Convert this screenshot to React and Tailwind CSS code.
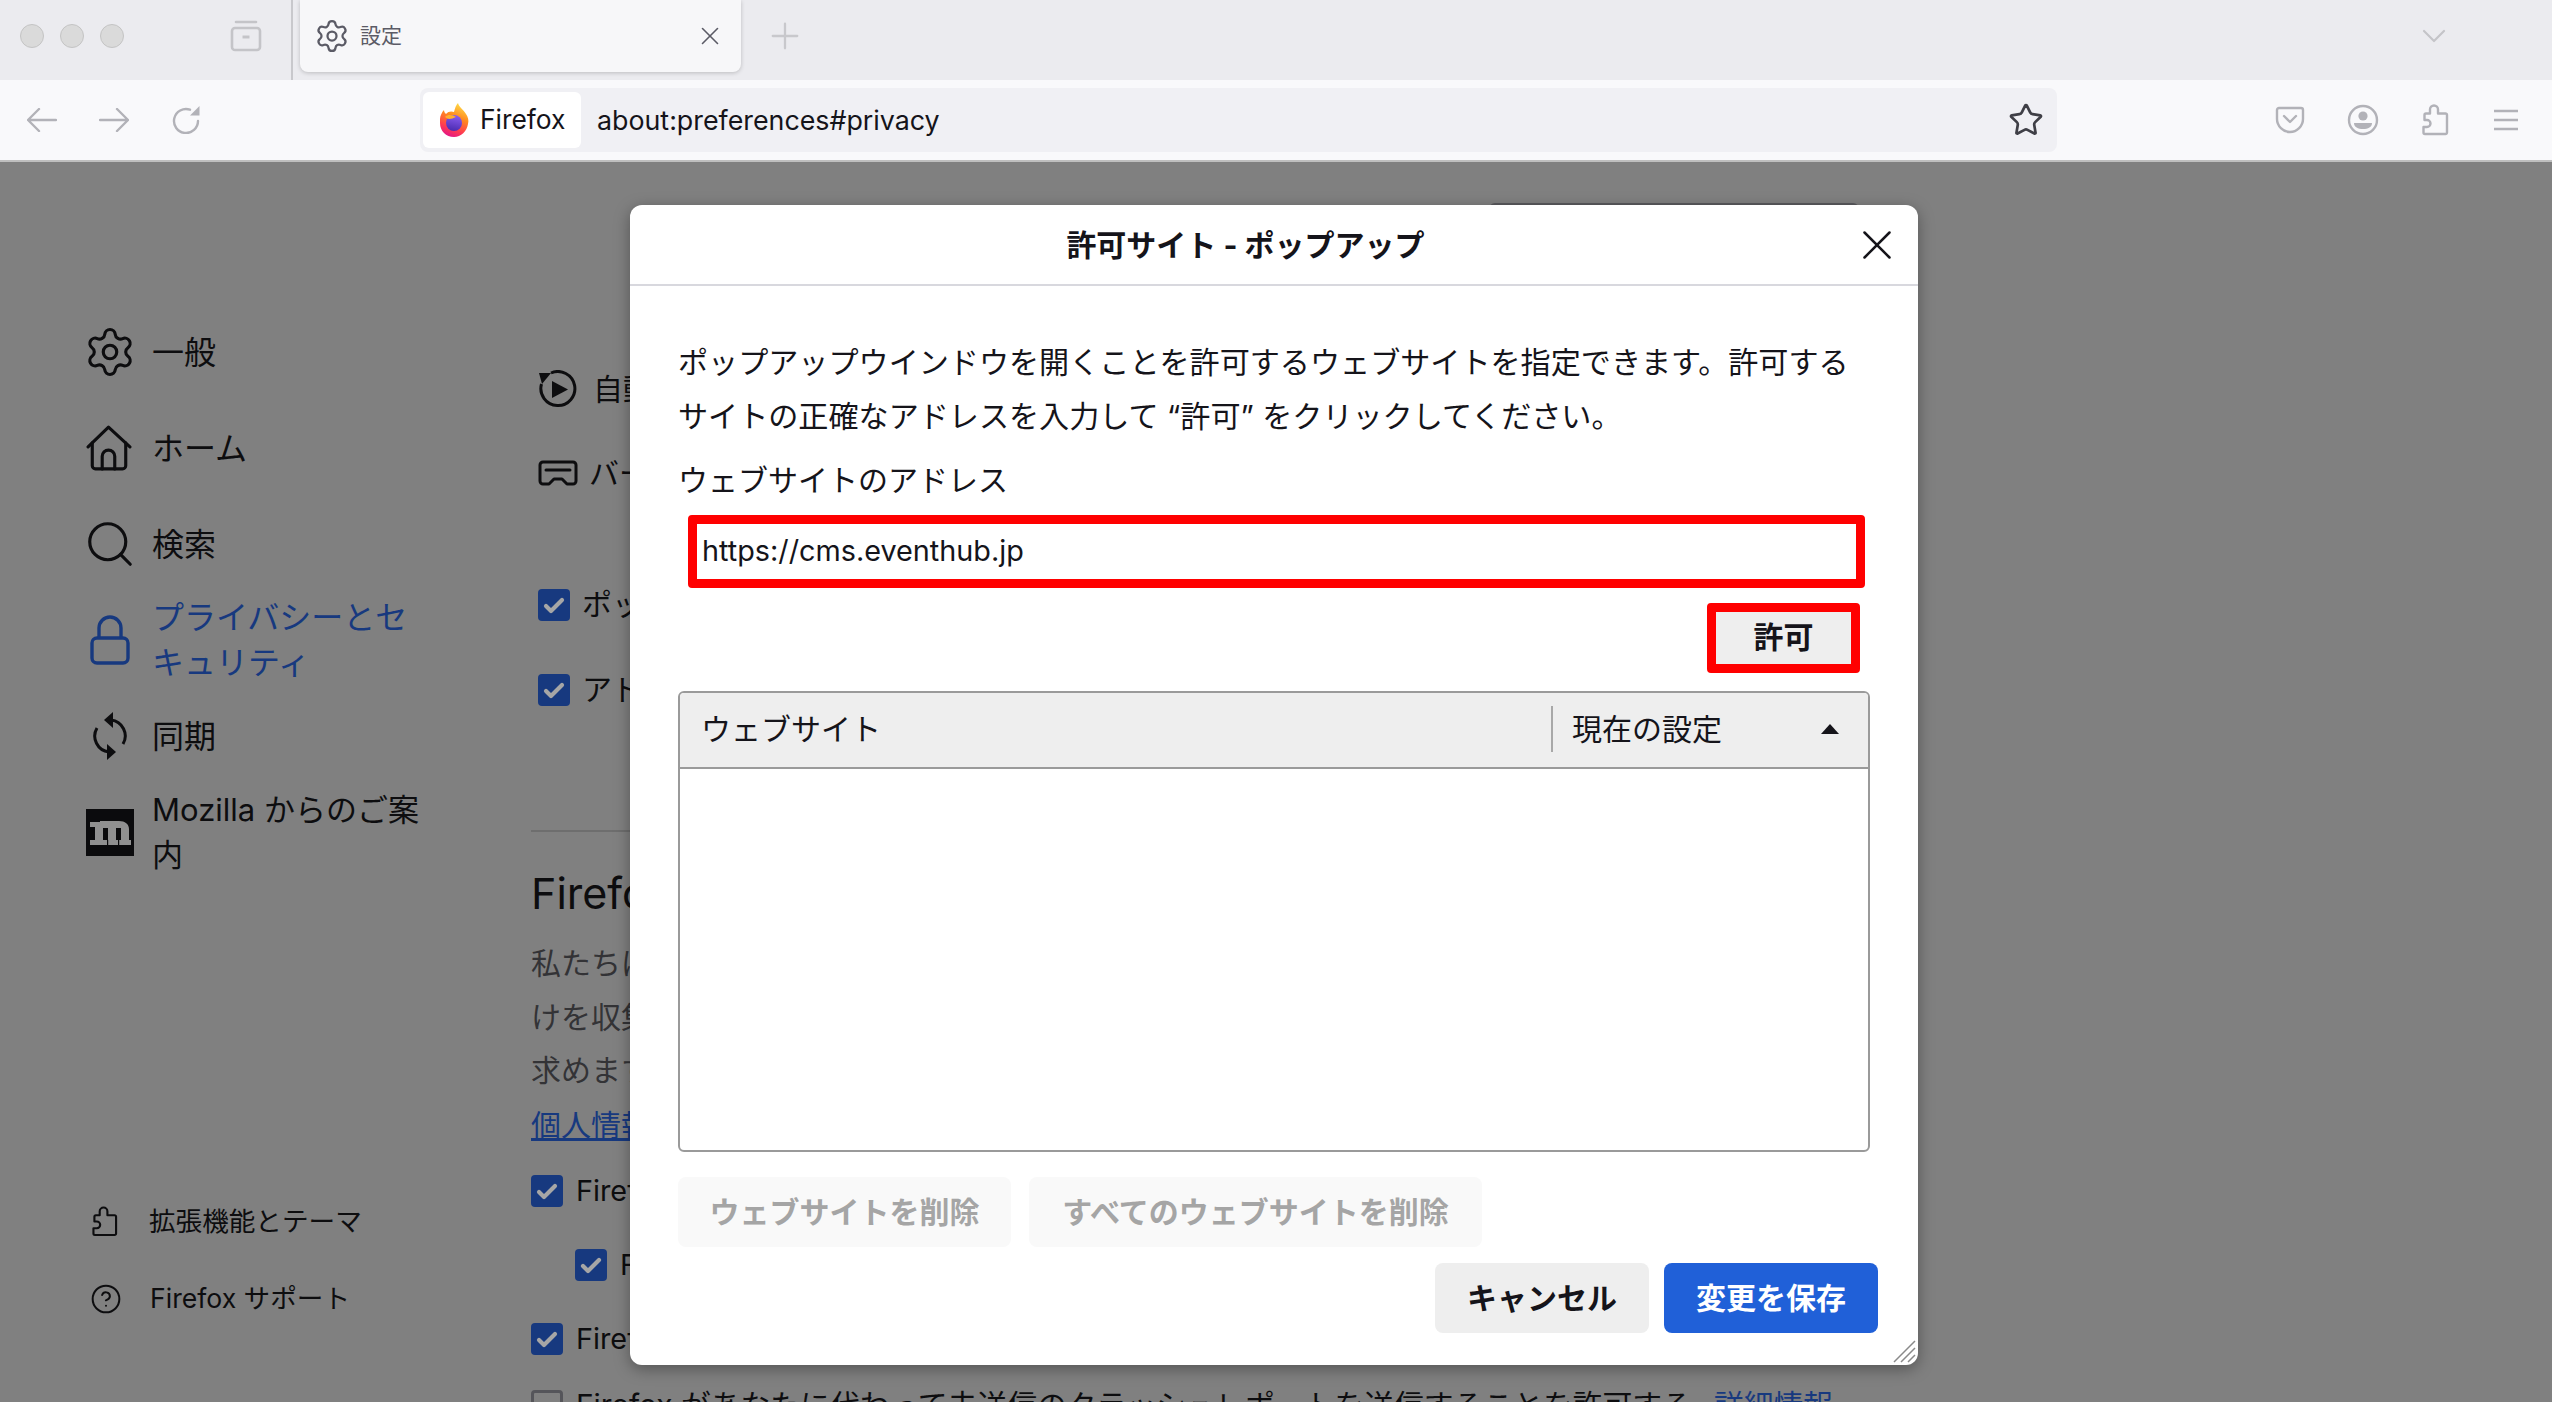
import { Settings, Search, CircleHelp, X, Plus, ChevronDown, Star } from 'lucide-react';

function FirefoxLogo() {
  return (
    <svg viewBox="0 0 30 34" className="w-[30px] h-[34px] shrink-0">
      <defs>
        <linearGradient id="ffBody" x1="0.7" y1="0" x2="0.35" y2="1">
          <stop offset="0" stopColor="#ffe04a" />
          <stop offset="0.4" stopColor="#ff8a1f" />
          <stop offset="0.75" stopColor="#ff3d4f" />
          <stop offset="1" stopColor="#e31587" />
        </linearGradient>
        <linearGradient id="ffCore" x1="0.6" y1="0" x2="0.4" y2="1">
          <stop offset="0" stopColor="#8a5cf0" />
          <stop offset="1" stopColor="#4a2bb0" />
        </linearGradient>
      </defs>
      <path d="M1 16C1 13 3 9 5 7c0 2 1 3 2 4 2-3 6-3 8-2 1-4 2-7 4-9 1 4 5 6 8 11 2 3 3 6 2 10-1 7-7 13-14 13C7 34 1 28 1 20z" fill="url(#ffBody)" />
      <circle cx="15" cy="20" r="8" fill="url(#ffCore)" />
      <path d="M6 14c3-3 8-2 11 0-3 1-4 2-7 2 0 0-3-1-4-2z" fill="#ffb02e" />
    </svg>
  );
}

function ViewIcon() {
  return (
    <svg viewBox="0 0 32 32" fill="none" stroke="#c4c4c8" strokeWidth="2.6" className="w-[32px] h-[32px]">
      <path d="M6 2h20" strokeLinecap="round" />
      <rect x="2" y="8" width="28" height="22" rx="3" />
      <path d="M12.5 17h7" strokeWidth="3" />
    </svg>
  );
}

function BackIcon({ flip }) {
  return (
    <svg viewBox="0 0 30 24" fill="none" stroke="#b2b2b8" strokeWidth="2.4" strokeLinecap="round" strokeLinejoin="round" className="w-[30px] h-[24px]">
      <path d={flip ? 'M1 12h28M18 1l11 11-11 11' : 'M1 12h28M12 1 1 12l11 11'} />
    </svg>
  );
}

function ReloadIcon() {
  return (
    <svg viewBox="0 0 28 28" fill="none" stroke="#b2b2b8" strokeWidth="2.4" className="w-[28px] h-[28px]">
      <path d="M18 3.7A12 12 0 1 0 26 15" strokeLinecap="round" />
      <path d="M18 9.5h9.5V0z" fill="#b2b2b8" stroke="none" />
    </svg>
  );
}

function PocketIcon() {
  return (
    <svg viewBox="0 0 30 30" fill="none" stroke="#b2b2b8" strokeWidth="2.4" className="w-[30px] h-[30px]" strokeLinecap="round" strokeLinejoin="round">
      <path d="M4 3h22a2 2 0 0 1 2 2v9c0 7-6 13-13 13S2 21 2 14V5a2 2 0 0 1 2-2z" />
      <path d="M9 11l6 6 6-6" />
    </svg>
  );
}

function AccountIcon() {
  return (
    <svg viewBox="0 0 32 32" className="w-[32px] h-[32px]">
      <circle cx="16" cy="16" r="14" fill="none" stroke="#b2b2b8" strokeWidth="2.4" />
      <circle cx="16" cy="12" r="4.6" fill="#b2b2b8" />
      <path d="M7 19h18c0 4-4 6-9 6s-9-2-9-6z" fill="#b2b2b8" />
    </svg>
  );
}

function PuzzleIcon({ color = '#b2b2b8', size = 'w-[27px] h-[32px]', width = 2.4 }) {
  return (
    <svg viewBox="0 0 27 32" fill="none" stroke={color} strokeWidth={width} strokeLinejoin="round" className={`${size} shrink-0`}>
      <path d="M3 30a1.5 1.5 0 0 1-1.5-1.5V23H5a3.5 3.5 0 0 0 0-7H2.5v-5A1.5 1.5 0 0 1 4 9.500h4V5.500a4 4 0 0 1 8 0v4h7.500A1.500 1.500 0 0 1 25 11v17.500a1.500 1.500 0 0 1-1.500 1.500z" />
    </svg>
  );
}

function HomeIcon() {
  return (
    <svg viewBox="0 0 44 44" fill="none" stroke="#0d0d0f" strokeWidth="3" strokeLinejoin="round" strokeLinecap="round" className="w-[46px] h-[46px] mr-[2px] shrink-0">
      <path d="M2 21 21.5 2 42 21" />
      <path d="M6 17v22a3 3 0 0 0 3 3h26a3 3 0 0 0 3-3V17" />
      <path d="M15.500 42V30a6 6 0 0 1 12 0v12" />
    </svg>
  );
}

function LockIcon() {
  return (
    <svg viewBox="0 0 40 50" fill="none" stroke="#17397f" strokeWidth="3.4" className="w-[40px] h-[50px]">
      <rect x="2" y="23" width="36" height="25" rx="5" />
      <path d="M9 23V13a11 11 0 0 1 22 0v10" />
    </svg>
  );
}

function SyncIcon() {
  return (
    <svg viewBox="0 0 36 48" fill="none" stroke="#0d0d0f" strokeWidth="3" className="w-[36px] h-[48px]">
      <path d="M19 8A16 16 0 0 1 31 32" />
      <path d="M17 40A16 16 0 0 1 5 16" />
      <path d="M21 0 12 8l9 8z" fill="#0d0d0f" stroke="none" />
      <path d="M15 32l9 8-9 8z" fill="#0d0d0f" stroke="none" />
    </svg>
  );
}

function MozillaLogo() {
  return (
    <svg viewBox="0 0 48 47" className="w-[48px] h-[47px]">
      <rect width="48" height="47" fill="#0b0b0d" />
      <path d="M4 13h10v-1h19c6 0 10 3 10 8v11h2v5H4v-5h5V18H4z" fill="#909090" />
      <rect x="17" y="19" width="5" height="12" fill="#0b0b0d" />
      <rect x="30" y="19" width="5" height="12" fill="#0b0b0d" />
      <rect x="21" y="31" width="1.200" height="5" fill="#0b0b0d" />
      <rect x="32" y="31" width="1.200" height="5" fill="#0b0b0d" />
    </svg>
  );
}

function AutoplayIcon() {
  return (
    <svg viewBox="0 0 38 38" fill="none" stroke="#0d0d0f" strokeWidth="3" className="w-[38px] h-[38px] shrink-0">
      <path d="M12 3A17 17 0 1 1 2.500 14" />
      <path d="M13 11l16 8.500L13 28z" fill="#0d0d0f" stroke="none" />
      <path d="M0 3h12L3 14z" fill="#0d0d0f" stroke="none" />
    </svg>
  );
}

function VrIcon() {
  return (
    <svg viewBox="0 0 40 26" fill="none" stroke="#0d0d0f" strokeWidth="3" strokeLinejoin="round" strokeLinecap="round" className="w-[40px] h-[26px] shrink-0">
      <path d="M5 2h30a3 3 0 0 1 3 3v16a3 3 0 0 1-3 3h-6l-5-5h-8l-5 5H5a3 3 0 0 1-3-3V5a3 3 0 0 1 3-3z" />
      <path d="M8 10h24" />
    </svg>
  );
}

function Checkbox({ checked = true }) {
  if (!checked) {
    return <div className="w-[32px] h-[32px] shrink-0 rounded-[4px] border-[3px] border-[#55555a]" />;
  }
  return (
    <div className="w-[32px] h-[32px] shrink-0 rounded-[4px] bg-[#17397f] flex items-center justify-center">
      <svg viewBox="0 0 24 24" fill="none" stroke="#a6a6a6" strokeWidth="4.200" strokeLinecap="round" strokeLinejoin="round" className="w-[24px] h-[24px]">
        <path d="M4 13l5 5L20 7" />
      </svg>
    </div>
  );
}

const NAV = [
  { icon: <Settings className="w-[54px] h-[54px] shrink-0" strokeWidth={1.4} />, label: '一般' },
  { icon: <HomeIcon />, label: 'ホーム' },
  { icon: <Search className="w-[54px] h-[54px] shrink-0" strokeWidth={1.4} />, label: '検索' },
  { icon: <LockIcon />, label: 'プライバシーとセキュリティ', active: true },
  { icon: <SyncIcon />, label: '同期' },
  { icon: <MozillaLogo />, label: 'Mozilla からのご案内', small: true },
];

function Sidebar() {
  return (
    <div className="w-[531px] shrink-0 flex flex-col pt-[142px] pb-[65px] pl-[86px]">
      {NAV.map((item) => (
        <div key={item.label} className={`h-[96px] shrink-0 flex items-center gap-[18px] ${item.active ? 'text-[#17397f]' : 'text-[#0d0d0f]'}`}>
          <div className="w-[48px] h-[56px] flex items-center justify-center shrink-0">{item.icon}</div>
          <div className={`w-[285px] leading-[45px] ${item.small ? 'text-[31px]' : 'text-[32px]'}`}>{item.label}</div>
        </div>
      ))}
      <div className="mt-auto h-[77px] shrink-0 flex items-center gap-[31px] pl-[6px] text-[#0d0d0f]">
        <PuzzleIcon color="#0d0d0f" size="w-[26px] h-[31px]" width={2.2} />
        <span className="text-[26.6px]">拡張機能とテーマ</span>
      </div>
      <div className="h-[77px] shrink-0 flex items-center gap-[28px] pl-[4px] text-[#0d0d0f]">
        <CircleHelp className="w-[32px] h-[32px]" strokeWidth={1.5} />
        <span className="text-[26.6px]">Firefox サポート</span>
      </div>
    </div>
  );
}

function Main() {
  return (
    <div className="flex-1 min-w-0 flex flex-col pt-[185px] text-[30px] text-[#0d0d0f] whitespace-nowrap">
      <div className="h-[84px] shrink-0 flex items-center gap-[16px] pl-[8px]">
        <AutoplayIcon />
        <span>自動再生</span>
      </div>
      <div className="h-[84px] shrink-0 flex items-center gap-[11px] pl-[7px]">
        <VrIcon />
        <span>バーチャルリアリティ</span>
      </div>
      <div className="h-[85px] shrink-0 mt-[47px] flex items-center gap-[12px] pl-[7px]">
        <Checkbox />
        <span>ポップアップウィンドウをブロックする</span>
      </div>
      <div className="h-[85px] shrink-0 flex items-center gap-[12px] pl-[7px]">
        <Checkbox />
        <span>アドオンのインストールを警告する</span>
      </div>
      <div className="mt-[98px] h-[2px] w-[900px] shrink-0 bg-[#6e6e6e]" />
      <div className="mt-[37px] h-[48px] shrink-0 flex items-center text-[43px]">Firefox のデータ収集と使用について</div>
      <div className="mt-[20px] shrink-0 flex flex-col leading-[53.5px] text-[#333336]">
        <span>私たちは Firefox の改善に必要なデータだ</span>
        <span>けを収集し、ご利用のプライバシーを尊重します。</span>
        <span>求めます。</span>
      </div>
      <a className="mt-[1px] h-[54px] shrink-0 flex items-center text-[#17397f] underline">個人情報について</a>
      <div className="h-[74px] shrink-0 mt-[1px] flex items-center gap-[13px] text-[28.8px]">
        <Checkbox />
        <span>Firefox が技術データを送信することを許可する</span>
      </div>
      <div className="h-[74px] shrink-0 flex items-center gap-[13px] pl-[44px] text-[28.8px]">
        <Checkbox />
        <span>Firefox が操作データを送信することを許可する</span>
      </div>
      <div className="h-[74px] shrink-0 flex items-center gap-[13px] text-[28.8px]">
        <Checkbox />
        <span>Firefox に調査のインストールと実行を許可する</span>
      </div>
      <div className="h-[60px] shrink-0 flex items-center gap-[13px] text-[29.8px]">
        <Checkbox checked={false} />
        <span>Firefox があなたに代わって未送信のクラッシュレポートを送信することを許可する</span>
        <span className="ml-[9px] text-[#17397f] underline">詳細情報</span>
      </div>
    </div>
  );
}

function Dialog() {
  return (
    <div className="absolute left-[630px] top-[205px] w-[1288px] h-[1160px] bg-white rounded-[12px] shadow-[0_4px_16px_rgba(0,0,0,0.35)] flex flex-col text-[30px] text-[#15141a]">
      <div className="h-[81px] shrink-0 flex items-center border-b-2 border-[#d8d8de]">
        <div className="flex-1 pl-[13px] pt-[2px] text-center font-bold">許可サイト - ポップアップ</div>
        <div className="w-[57px] mr-[13px] flex justify-center">
          <X className="w-[50px] h-[50px]" strokeWidth={1.2} />
        </div>
      </div>
      <div className="flex-1 flex flex-col pl-[48px] pr-[48px] pt-[49px]">
        <p className="leading-[54px] text-[30.1px]">
          ポップアップウインドウを開くことを許可するウェブサイトを指定できます。許可するサイトの正確なアドレスを入力して “許可” をクリックしてください。
        </p>
        <div className="mt-[17px] h-[40px] flex items-center">ウェブサイトのアドレス</div>
        <input
          readOnly
          value="https://cms.eventhub.jp"
          className="mt-[15px] ml-[10px] w-[1177px] h-[73px] border-[9px] border-[#ff0000] rounded-[4px] pl-[5px] pb-[2px] outline-none bg-white text-[28.8px]"
        />
        <button className="mt-[15px] self-end mr-[10px] w-[153px] h-[70px] border-[9px] border-[#ff0000] rounded-[4px] bg-[#eeeeee] font-bold flex items-center justify-center pb-[2px]">
          許可
        </button>
        <div className="mt-[18px] h-[461px] border-2 border-[#9a9a9a] rounded-[6px] flex flex-col overflow-hidden">
          <div className="h-[76px] shrink-0 bg-[#eeeeee] border-b-2 border-[#9a9a9a] flex items-center pb-[2px]">
            <div className="w-[871px] pl-[21px]">ウェブサイト</div>
            <div className="w-[2px] h-[46px] bg-[#a8a8a8]" />
            <div className="flex-1 pl-[19px]">現在の設定</div>
            <svg viewBox="0 0 18 10" className="w-[18px] h-[10px] mr-[29px]">
              <path d="M9 0l9 10H0z" fill="#15141a" />
            </svg>
          </div>
        </div>
        <div className="mt-[25px] flex gap-[18px] font-bold text-[#a5a5a5]">
          <button className="w-[333px] h-[70px] rounded-[8px] bg-[#f9f9f9] flex items-center justify-center">ウェブサイトを削除</button>
          <button className="w-[453px] h-[70px] rounded-[8px] bg-[#f9f9f9] flex items-center justify-center">すべてのウェブサイトを削除</button>
        </div>
        <div className="mt-[16px] mr-[-8px] flex justify-end gap-[15px] font-bold">
          <button className="w-[214px] h-[70px] rounded-[8px] bg-[#eeeeee] flex items-center justify-center">キャンセル</button>
          <button className="w-[214px] h-[70px] rounded-[8px] bg-[#2060d8] text-white flex items-center justify-center">変更を保存</button>
        </div>
      </div>
      <svg viewBox="0 0 24 24" fill="none" stroke="#8a8a8a" strokeWidth="1.5" className="absolute right-[2px] bottom-[2px] w-[24px] h-[24px]">
        <path d="M2 23 23 2M9 23 23 9M16 23l7-7" />
      </svg>
    </div>
  );
}

export default function App() {
  return (
    <div className="relative w-[2552px] h-[1402px] overflow-hidden flex flex-col font-['Inter','Noto_Sans_CJK_JP',sans-serif] bg-[#808080]">
      <div className="h-[80px] shrink-0 flex bg-[#ebebef]">
        <div className="flex items-center gap-[16px] pl-[20px] h-[72px]">
          <div className="w-[24px] h-[24px] rounded-full bg-[#dadada] border border-[#c4c4c4]" />
          <div className="w-[24px] h-[24px] rounded-full bg-[#dadada] border border-[#c4c4c4]" />
          <div className="w-[24px] h-[24px] rounded-full bg-[#dadada] border border-[#c4c4c4]" />
        </div>
        <div className="ml-[106px] h-[72px] flex items-center"><ViewIcon /></div>
        <div className="ml-[29px] w-[2px] bg-[#c8c8cc]" />
        <div className="ml-[7px] w-[441px] h-[72px] rounded-b-[8px] bg-[#f7f7f9] shadow-[0_1px_4px_rgba(0,0,0,0.2)] flex items-center pl-[14px] pr-[16px] text-[#5b5b66]">
          <Settings className="w-[36px] h-[36px]" strokeWidth={1.5} />
          <span className="ml-[10px] text-[21px]">設定</span>
          <X className="ml-auto w-[30px] h-[30px]" strokeWidth={1.3} />
        </div>
        <div className="ml-[23px] h-[72px] flex items-center">
          <Plus className="w-[42px] h-[42px] text-[#c8c8cc]" strokeWidth={1.3} />
        </div>
        <div className="ml-auto mr-[98px] h-[72px] flex items-center">
          <ChevronDown className="w-[40px] h-[40px] text-[#c4c4c8]" strokeWidth={1.3} />
        </div>
      </div>
      <div className="h-[80px] shrink-0 flex items-center bg-[#f9f9fb] pl-[20px]">
        <div className="flex items-center gap-[28px]">
          <div className="w-[44px] flex justify-center"><BackIcon /></div>
          <div className="w-[44px] flex justify-center"><BackIcon flip /></div>
          <div className="w-[44px] flex justify-center"><ReloadIcon /></div>
        </div>
        <div className="ml-[212px] w-[1637px] h-[64px] rounded-[8px] bg-[#f0f0f4] flex items-center pl-[3px] pr-[13px] text-[#15141a]">
          <div className="w-[158px] h-[56px] rounded-[6px] bg-white flex items-center pl-[16px] gap-[11px]">
            <FirefoxLogo />
            <span className="text-[26.4px]">Firefox</span>
          </div>
          <span className="ml-[16px] text-[26.8px]">about:preferences#privacy</span>
          <Star className="ml-auto w-[36px] h-[36px] text-[#3f3f46]" strokeWidth={1.8} />
        </div>
        <div className="ml-[211px] flex items-center">
          <div className="w-[44px] flex justify-center"><PocketIcon /></div>
          <div className="w-[44px] ml-[29px] flex justify-center"><AccountIcon /></div>
          <div className="w-[44px] ml-[28px] flex justify-center"><PuzzleIcon /></div>
          <div className="w-[44px] ml-[27px] flex justify-center">
            <svg viewBox="0 0 26 22" fill="none" stroke="#b2b2b8" strokeWidth="2.4" className="w-[26px] h-[22px]">
              <path d="M1 2h24M1 11h24M1 20h24" />
            </svg>
          </div>
        </div>
      </div>
      <div className="h-[2px] shrink-0 bg-[#bfbfbf]" />
      <div className="flex-1 min-h-0 flex overflow-hidden">
        <Sidebar />
        <Main />
      </div>
      {/* top edge of the search box, just showing above the dialog */}
      <div className="absolute left-[1489px] top-[203px] w-[370px] h-[20px] rounded-[6px] border-2 border-[#5a5a5e]" />
      <Dialog />
    </div>
  );
}
